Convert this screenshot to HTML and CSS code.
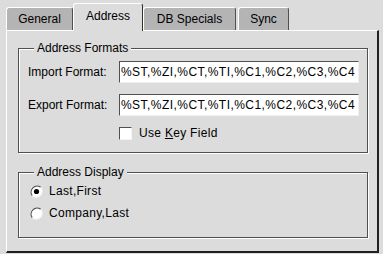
FILE: index.html
```html
<!DOCTYPE html>
<html>
<head>
<meta charset="utf-8">
<link rel="stylesheet" href="styles.css">
</head>
<body>
<div class="tabs">
  <div class="tab tab-general">General</div>
  <div class="tab tab-active tab-address">Address</div>
  <div class="tab tab-db">DB Specials</div>
  <div class="tab tab-sync">Sync</div>
</div>
<div class="panel">
  <fieldset class="group group-formats">
    <legend>Address Formats</legend>
    <div class="row row-first">
      <span class="label">Import Format:</span>
      <div class="field">%ST,%ZI,%CT,%TI,%C1,%C2,%C3,%C4</div>
    </div>
    <div class="row row-second">
      <span class="label">Export Format:</span>
      <div class="field">%ST,%ZI,%CT,%TI,%C1,%C2,%C3,%C4</div>
    </div>
    <div class="check-row">
      <span class="checkbox"></span>
      <span>Use <u>K</u>ey Field</span>
    </div>
  </fieldset>
  <fieldset class="group group-display">
    <legend>Address Display</legend>
    <div class="radio-row">
      <svg class="radio" width="13" height="13" viewBox="0 0 13 13">
        <circle cx="6.5" cy="6.5" r="6" fill="#fff"/>
        <path d="M2.3 10.7 A6 6 0 0 1 10.7 2.3" fill="none" stroke="#505050" stroke-width="1.2"/>
        <path d="M10.7 2.3 A6 6 0 0 1 2.3 10.7" fill="none" stroke="#f4f4f4" stroke-width="1.2"/>
        <circle cx="6.5" cy="6.5" r="2.6" fill="#000"/>
      </svg>
      <span>Last,First</span>
    </div>
    <div class="radio-row">
      <svg class="radio" width="13" height="13" viewBox="0 0 13 13">
        <circle cx="6.5" cy="6.5" r="6" fill="#fff"/>
        <path d="M2.3 10.7 A6 6 0 0 1 10.7 2.3" fill="none" stroke="#505050" stroke-width="1.2"/>
        <path d="M10.7 2.3 A6 6 0 0 1 2.3 10.7" fill="none" stroke="#f4f4f4" stroke-width="1.2"/>
      </svg>
      <span>Company,Last</span>
    </div>
  </fieldset>
</div>
</body>
</html>
```
FILE: styles.css
```css
html, body {
  margin: 0;
  padding: 0;
  background: #dcdcdc;
}
body {
  width: 383px;
  height: 254px;
  overflow: hidden;
  font-family: "Liberation Sans", Arial, sans-serif;
  font-size: 12px;
  color: #000;
}
.tabs {
  display: flex;
  align-items: flex-end;
  height: 30px;
  padding-left: 6px;
  box-sizing: border-box;
  position: relative;
  z-index: 1;
}
.tab {
  box-sizing: border-box;
  height: 23px;
  background: #b4b4b4;
  border-top: 1px solid #fff;
  border-left: 1px solid #fff;
  border-right: 1px solid #505050;
  border-radius: 3px 3px 0 0;
  padding-top: 4px;
  text-align: center;
  line-height: 14px;
}
.tab-general { width: 67px; }
.tab-address { width: 70px; }
.tab-db { width: 93px; }
.tab-sync { width: 51px; margin-left: 2px; }
.tab-active {
  height: 28px;
  background: #dcdcdc;
  padding-top: 5px;
  margin-bottom: -1px;
  border-right-color: #303030;
}
.panel {
  box-sizing: border-box;
  width: 373px;
  height: 223px;
  margin-left: 6px;
  border-top: 1px solid #fff;
  border-left: 1px solid #fff;
  border-right: 2px solid #202020;
  border-bottom: 2px solid #202020;
  padding: 10px 9px 0 11px;
}
.group {
  margin: 0;
  width: 350px;
  box-sizing: border-box;
  border: 1px solid #505050;
  box-shadow: inset 1px 1px 0 #fff, 1px 1px 0 #fff;
  padding: 0 8px 0 9px;
}
.group legend {
  padding: 0 3px;
  margin-left: 6px;
  line-height: 14px;
  background: #dcdcdc;
}
.group-formats {
  padding-bottom: 8px;
}
.group-display {
  margin-top: 12px;
  padding-bottom: 13px;
}
.row {
  display: flex;
  align-items: center;
  height: 22px;
}
.row-first { margin-top: 6px; }
.row-second { margin-top: 11px; }
.label {
  width: 91px;
}
.field {
  box-sizing: border-box;
  width: 240px;
  height: 22px;
  background: #fff;
  border-top: 1px solid #505050;
  border-left: 1px solid #505050;
  border-right: 1px solid #f0f0f0;
  border-bottom: 1px solid #f0f0f0;
  padding-left: 1px;
  line-height: 20px;
  letter-spacing: 0.45px;
  white-space: nowrap;
  overflow: hidden;
}
.check-row {
  display: flex;
  align-items: center;
  height: 22px;
  margin-top: 6px;
  padding-left: 91px;
  gap: 7px;
  letter-spacing: 0.3px;
}
.checkbox {
  box-sizing: border-box;
  width: 13px;
  height: 13px;
  background: #fff;
  border-top: 1px solid #505050;
  border-left: 1px solid #505050;
  border-right: 1px solid #f4f4f4;
  border-bottom: 1px solid #f4f4f4;
}
.radio-row {
  display: flex;
  align-items: center;
  height: 22px;
  padding-left: 2px;
  gap: 6px;
  letter-spacing: 0.3px;
}
.radio-row:first-of-type { margin-top: 1px; }
.radio { display: block; }
```
